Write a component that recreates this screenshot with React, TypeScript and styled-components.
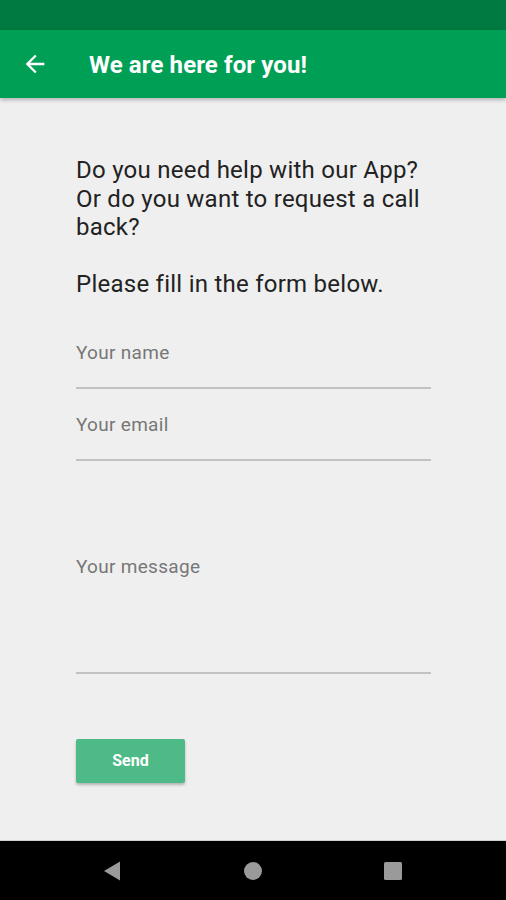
import React from "react";
import styled, { createGlobalStyle } from "styled-components";

const GlobalStyle = createGlobalStyle`
  html, body {
    margin: 0;
    padding: 0;
    background: #efefef;
    font-family: Roboto, "Noto Sans", Arial, sans-serif;
  }
`;

const Screen = styled.div`
  width: 506px;
  height: 900px;
  display: flex;
  flex-direction: column;
  background: #efefef;
  overflow: hidden;
`;

const StatusBar = styled.div`
  height: 30px;
  background: #017a41;
  flex-shrink: 0;
`;

const AppBar = styled.div`
  height: 68px;
  background: #009f56;
  display: flex;
  align-items: center;
  padding-left: 21px;
  gap: 40px;
  box-shadow: 0 2px 4px rgba(0, 0, 0, 0.25);
  position: relative;
  z-index: 2;
  flex-shrink: 0;
`;

const BackButton = styled.button`
  width: 28px;
  height: 28px;
  padding: 0;
  border: none;
  background: transparent;
  display: flex;
  align-items: center;
  justify-content: center;
`;

const Title = styled.h1`
  margin: 2px 0 0;
  font-size: 24px;
  font-weight: 700;
  color: #ffffff;
  letter-spacing: 0.1px;
`;

const Content = styled.main`
  flex: 1;
  padding: 58px 75px 0 76px;
  display: flex;
  flex-direction: column;
`;

const Intro = styled.p`
  margin: 0;
  font-size: 24px;
  line-height: 28.5px;
  letter-spacing: 0.25px;
  color: #222222;
`;

const Instruction = styled(Intro)`
  margin-top: 28.5px;
`;

const FieldsWrap = styled.div`
  margin-top: 42px;
  display: flex;
  flex-direction: column;
  gap: 24px;
`;

const Field = styled.label<{ $height: number; $padTop?: number }>`
  box-sizing: border-box;
  display: flex;
  flex-direction: column;
  border-bottom: 2px solid #c2c2c2;
  height: ${(p) => p.$height}px;
  padding-top: ${(p) => p.$padTop ?? 0}px;
`;

const Placeholder = styled.span`
  font-size: 19px;
  letter-spacing: 0.3px;
  color: #777777;
  line-height: 24px;
`;

const SendButton = styled.button`
  margin-top: 65px;
  width: 109px;
  height: 44px;
  border: none;
  border-radius: 2px;
  background: #4dba87;
  color: #ffffff;
  font-family: Roboto, Arial, sans-serif;
  font-size: 16px;
  font-weight: 700;
  box-shadow: 0 2px 3px rgba(0, 0, 0, 0.25);
`;

const NavBar = styled.div`
  height: 59px;
  background: #000000;
  display: flex;
  align-items: center;
  justify-content: space-between;
  padding: 0 103px 0 102px;
  flex-shrink: 0;
  border-top: 1px solid #cfcfcf;
`;

const NavIcon = styled.svg`
  width: 20px;
  height: 20px;
  display: block;
`;

export default function App() {
  return (
    <>
      <GlobalStyle />
      <Screen>
        <StatusBar />
        <AppBar>
          <BackButton aria-label="Back">
            <svg width="28" height="28" viewBox="0 0 24 24">
              <path
                d="M20 11H7.83l5.59-5.59L12 4l-8 8 8 8 1.41-1.41L7.83 13H20v-2z"
                fill="#ffffff"
              />
            </svg>
          </BackButton>
          <Title>We are here for you!</Title>
        </AppBar>
        <Content>
          <Intro>
            Do you need help with our App?
            <br />
            Or do you want to request a call back?
          </Intro>
          <Instruction>Please fill in the form below.</Instruction>
          <FieldsWrap>
            <Field $height={48}>
              <Placeholder>Your name</Placeholder>
            </Field>
            <Field $height={48}>
              <Placeholder>Your email</Placeholder>
            </Field>
            <Field $height={189} $padTop={70}>
              <Placeholder>Your message</Placeholder>
            </Field>
          </FieldsWrap>
          <SendButton>Send</SendButton>
        </Content>
        <NavBar>
          <NavIcon viewBox="0 0 20 20">
            <path d="M18 0.5 L18 19.5 L2 10 Z" fill="#9a9a9a" />
          </NavIcon>
          <NavIcon viewBox="0 0 20 20">
            <circle cx="10" cy="10" r="9" fill="#9a9a9a" />
          </NavIcon>
          <NavIcon viewBox="0 0 20 20">
            <rect x="1" y="1" width="18" height="18" rx="1.5" fill="#9a9a9a" />
          </NavIcon>
        </NavBar>
      </Screen>
    </>
  );
}
